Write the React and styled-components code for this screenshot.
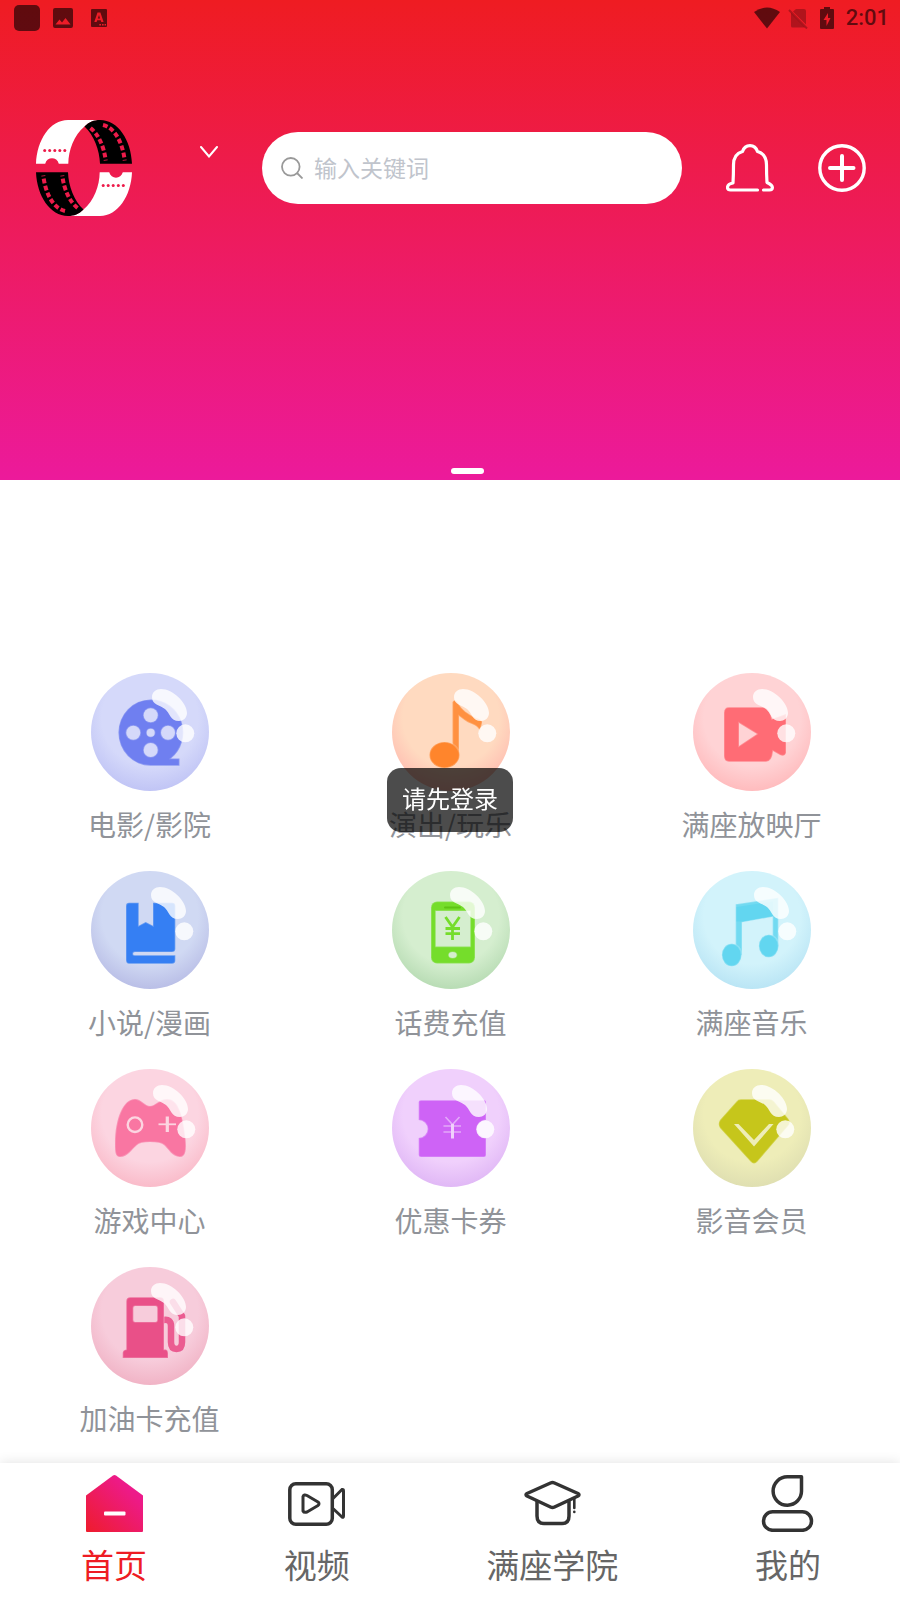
import React from "react";
import styled, { createGlobalStyle } from "styled-components";

const GlobalStyle = createGlobalStyle`
  * { box-sizing: border-box; }
  body {
    margin: 0;
    background: #fff;
    font-family: "Noto Sans CJK SC", "Noto Sans", sans-serif;
  }
  button, input { font-family: inherit; }
`;

const Page = styled.div`
  display: flex;
  flex-direction: column;
  min-height: 100vh;
`;

const Header = styled.header`
  display: flex;
  flex-direction: column;
  height: 480px;
  background: linear-gradient(#ef1c22, #ec1a9b);
`;

const StatusBar = styled.div`
  display: flex;
  align-items: center;
  justify-content: space-between;
  height: 36px;
  padding: 0 11px 0 14px;
  color: rgba(0, 0, 0, 0.6);
`;

const StatusGroup = styled.div`
  display: flex;
  align-items: center;
  gap: ${(p) => p.$gap}px;
`;

const Clock = styled.time`
  font: 500 22px/36px Roboto, sans-serif;
`;

const TopBar = styled.div`
  display: flex;
  align-items: center;
  gap: 44px;
  margin-top: 84px;
  padding: 0 34px 0 36px;
`;

const BareButton = styled.button`
  display: flex;
  align-items: center;
  flex: none;
  padding: 0;
  border: 0;
  background: none;
  color: #fff;
  cursor: pointer;
`;

const CityButton = styled(BareButton)`
  align-self: flex-start;
  justify-content: flex-end;
  width: 42px;
  height: 64px;
`;

const LogoMark = styled.svg`
  flex: none;
`;

const SearchBox = styled.form`
  display: flex;
  flex: 1;
  align-items: center;
  gap: 11px;
  min-width: 0;
  height: 72px;
  padding: 0 30px 0 19px;
  border-radius: 36px;
  background: #fff;
  svg { flex: none; }
`;

const SearchInput = styled.input`
  flex: 1;
  min-width: 0;
  height: 40px;
  padding: 0 0 2px;
  border: 0;
  outline: 0;
  background: none;
  color: #606266;
  font-size: 23px;
  &::placeholder { color: #c0c4cc; opacity: 1; }
`;

const Indicators = styled.div`
  display: flex;
  justify-content: center;
  gap: 2px;
  margin-top: auto;
  padding-bottom: 6px;
`;

const Indicator = styled.button`
  width: 33px;
  height: 6px;
  padding: 0;
  border: 0;
  border-radius: 3px;
  background: ${(p) => (p.$active ? "#fff" : "transparent")};
`;

const Services = styled.main`
  display: grid;
  grid-template-columns: repeat(3, 1fr);
  gap: 27px 4px;
  padding: 193px 0 25px 1px;
`;

const Service = styled.a`
  display: flex;
  flex-direction: column;
  align-items: center;
  gap: 13px;
  color: #909399;
  text-decoration: none;
`;

const ServiceName = styled.span`
  font-size: 28px;
  line-height: 40px;
`;

const TabBar = styled.nav`
  display: flex;
  justify-content: space-between;
  margin-top: auto;
  padding: 12px 79px 12px 81px;
  background: #fff;
  box-shadow: 0 0 12px rgba(0, 0, 0, 0.12);
`;

const Tab = styled.a`
  display: flex;
  flex-direction: column;
  align-items: center;
  gap: 8px;
  color: ${(p) => (p.$active ? "#ee1c23" : "#666")};
  font-size: 33px;
  line-height: 48px;
  text-decoration: none;
`;

const Toast = styled.div`
  position: fixed;
  top: 50%;
  left: 50%;
  transform: translate(-50%, -50%);
  padding: 10px 15px 14px;
  border-radius: 14px;
  background: rgba(0, 0, 0, 0.7);
  color: #fff;
  font-size: 24px;
  line-height: 40px;
  white-space: nowrap;
`;

const ticketHalf = (
  <>
    <path fill="#fff" d="M32 0H65C58 0 53 2 48.5 6.5C38 15 32.5 30 32.3 43.7H22.8C21 36.5 11 36.5 9.2 43.7H0C1 20 14 0 32 0Z" />
    <path fill="#000" d="M48.5 6.5C53 2 58 0 64 0C82 0 95 20 96 43.7H64C63.5 30 58 15 48.5 6.5Z" />
    <g fill="none" stroke="#ed1b4a" strokeWidth="4" strokeDasharray="4.8 2.4">
      <path d="M54.500 8C62 14 68 26 69.700 40.500" />
      <path d="M67 5C80 8 87 25 88.700 40.500" />
    </g>
    <g fill="#ed1b4a">
      {[8.7, 13.7, 18.8, 23.8, 28.8].map((x) => (
        <circle key={x} cx={x} cy="30.5" r="1.5" />
      ))}
    </g>
  </>
);

const Logo = () => (
  <LogoMark width="96" height="96" viewBox="0 0 96 96" role="img" aria-label="满座">
    {ticketHalf}
    <g transform="rotate(180 48 48)">{ticketHalf}</g>
  </LogoMark>
);

const Yen = ({ color, width }) => (
  <path
    d="M53.5 46L60.5 56L67.5 46M60.5 56V69M53.5 57.5H68M53.5 62.7H68"
    fill="none"
    stroke={color}
    strokeOpacity="1"
    strokeWidth={width}
  />
);

const services = [
  {
    name: "电影/影院", base: "#d5d9fa", edge: "#bbbff4", ink: "#6f7ff0", dx: 0,
    art: (c, b) => (
      <>
        <path d="M59.500 26.500A32 33 0 0 1 80 85.500H88.500V92.700H59.500A32 33 0 0 1 59.500 26.500Z" />
        <g fill={b}>
          <circle cx="59.7" cy="42.3" r="7" />
          <circle cx="42.3" cy="59.7" r="7" />
          <circle cx="77" cy="59.7" r="7" />
          <circle cx="59.7" cy="77" r="7" />
          <circle cx="59.7" cy="59.7" r="4" />
        </g>
      </>
    ),
  },
  {
    name: "演出/玩乐", base: "#ffdac0", edge: "#ffb6ad", ink: "#ff852c", dx: 1,
    art: () => (
      <>
        <path opacity=".85" d="M60.5 29Q63 25 66 30C70 37 76 41 84 45Q91 47 90 50L88 58Q86 53 80 51C74 49 70 45 67 43V82H60.5Z" />
        <ellipse cx="52.5" cy="82" rx="15" ry="13" />
      </>
    ),
  },
  {
    name: "满座放映厅", base: "#ffd3d5", edge: "#ffb5b7", ink: "#ff6c75", dx: -1,
    art: (c, b) => (
      <>
        <path d="M36 34.3H71Q77 36 79 46L93 41V80Q92 84 87 82L80 78Q79 88.7 73 88.7H36Q31 88.7 31 83V40Q31 34.3 36 34.3Z" />
        <path fill={b} d="M46 50L64 61L46 73Z" />
      </>
    ),
  },
  {
    name: "小说/漫画", base: "#d0d9f3", edge: "#b3b7e3", ink: "#357ff3", dx: -1,
    art: () => (
      <path d="M38 31.7H47.7V54.7L54.7 51L62 54.7V31.7H81Q84.3 31.7 84.3 35V78Q84.3 81 81 81H44Q42 81 42 82.7Q42 84.3 44 84.3H84.3V90Q84 92.7 81 92.7H38Q35 92.7 35 89V35Q35 31.7 38 31.7Z" />
    ),
  },
  {
    name: "话费充值", base: "#d5eecf", edge: "#b0d7ad", ink: "#75dd2b", dx: -3,
    art: (c, b) => (
      <>
        <rect x="39" y="30.5" width="44" height="62" rx="6" />
        <rect fill={b} x="43.7" y="40" width="34.6" height="35.5" />
        <ellipse fill={b} cx="60.7" cy="84" rx="4" ry="3" />
        <rect x="52" y="35.5" width="17" height="2" rx="1" fill="#5ec414" stroke="none" />
        <Yen color={c} width="2.8" />
      </>
    ),
  },
  {
    name: "满座音乐", base: "#d2f3fb", edge: "#b3e1f3", ink: "#62d6f0", dx: 0,
    art: () => (
      <>
        <path opacity=".85" d="M42.7 33.3L85.3 26.7V75H79.7V45.7L49 51.3V84H42.7Z" />
        <path stroke="none" d="M43.500 36L80 30.500V45L49 50.500H43.500Z" />
        <ellipse cx="38.7" cy="84" rx="9.8" ry="11.3" />
        <ellipse cx="75.7" cy="75" rx="9.8" ry="11.3" />
      </>
    ),
  },
  {
    name: "游戏中心", base: "#fcd5e1", edge: "#f9b4c3", ink: "#f976a2", dx: 1,
    art: (c, b) => (
      <>
        <path d="M44 30C50 30 54 37 59 37S69 30 76 30C88 30 92 48 94.5 70C95.5 80 95 88 89 88C81 88 77 79 73 76Q70 73 59 73Q49 73 46 76C41 80 37 88 29 88C24 88 24 82 24 75C24 50 32 30 44 30Z" />
        <g fill="none" stroke={b} strokeOpacity="1">
          <circle cx="44" cy="55.7" r="7.3" strokeWidth="2.4" />
          <path strokeWidth="1.8" d="M67.500 55.300H85" />
          <path strokeWidth="3.2" d="M76.300 47.500V63" />
        </g>
      </>
    ),
  },
  {
    name: "优惠卡券", base: "#f0d0fc", edge: "#dcb1f4", ink: "#ce63f6", dx: -1,
    art: (c, b) => (
      <>
        <path d="M29 31.3H92Q94 31.3 94 33V51A9 9 0 0 0 94 69V86Q94 88 92 88H29Q26.7 88 26.7 86V69A9 9 0 0 0 26.7 51V33Q26.7 31.3 29 31.3Z" />
        <path d="M53.500 48L60.500 55.500L67.500 48M51.500 57H69M51.500 63H69" fill="none" stroke={b} strokeOpacity=".65" strokeWidth="1.6" />
        <path d="M60.500 55V69.500" fill="none" stroke={b} strokeOpacity="1" strokeWidth="3" />
      </>
    ),
  },
  {
    name: "影音会员", base: "#eeedb8", edge: "#dbdbaf", ink: "#c6c61b", dx: -2,
    art: (c, b) => (
      <>
        <path d="M48 30.3H76Q79 30.3 81 32.5L95.5 50Q98 54 95 57L64.5 92.5Q61 96.5 57.5 92.5L27 59Q24.5 55 27 51L43.5 32.5Q45 30.3 48 30.3Z" />
        <path fill={b} stroke="none" d="M41 55H45.500L61 71L76 55H80.500L61 77.500Z" />
      </>
    ),
  },
  {
    name: "加油卡充值", base: "#f7ccdb", edge: "#efadc0", ink: "#e95088", dx: -1,
    art: (c, b) => (
      <>
        <path fill="none" stroke={c} strokeOpacity=".9" strokeWidth="6.500" strokeLinecap="round" strokeLinejoin="round" d="M73 53Q80 52 80 59V75Q80 82 85.500 82T91 75V49L82 35" />
        <path d="M39.5 30.3H69Q73 30.3 73 34.5V82.5H75Q77 83 77 86V91H31.7V86Q31.7 83 35.3 82.5V34.5Q35.3 30.3 39.5 30.3Z" />
        <rect fill={b} x="42.3" y="39" width="24" height="16" rx="2" />
      </>
    ),
  },
];

const Bubble = ({ item, id }) => (
  <svg width="118" height="118" viewBox="0 0 118 118" aria-hidden="true">
    <defs>
      <radialGradient id={id} cx="50%" cy="38%" r="68%">
        <stop offset="0.6" stopColor={item.base} />
        <stop offset="1" stopColor={item.edge} />
      </radialGradient>
    </defs>
    <circle cx="59" cy="59" r="59" fill={`url(#${id})`} />
    <g fill={item.ink} stroke={item.base} strokeOpacity=".3" strokeWidth="1.6">
      {item.art(item.ink, item.base)}
    </g>
    <g fill="#fff" fillOpacity=".8" transform={`translate(${item.dx} 0)`}>
      <path d="M61 24C61 19 65 16 70 16C82 16 96 30 96 40C96 45 92 48 88 48C79 48 79 40 74 36C69 32 61 32 61 24Z" />
      <circle cx="94.3" cy="60.3" r="9" />
    </g>
  </svg>
);

const HomeIcon = () => (
  <svg width="57" height="57" viewBox="0 0 57 57" aria-hidden="true">
    <defs>
      <linearGradient id="home" x1="0" y1="1" x2="1" y2="0">
        <stop offset="0" stopColor="#ee1c2c" />
        <stop offset=".75" stopColor="#ed1a88" />
        <stop offset="1" stopColor="#ed1a94" />
      </linearGradient>
    </defs>
    <path fill="url(#home)" d="M0 20.5L27 .6Q28.5 -.4 30 .6L57 20.5V56Q57 57 56 57H1Q0 57 0 56Z" />
    <rect x="18" y="36.5" width="21.5" height="4" rx="1" fill="#fff" />
  </svg>
);

const OutlineIcon = ({ children }) => (
  <svg width="57" height="57" viewBox="0 0 57 57" fill="none" stroke="#333" strokeWidth="3.5" strokeLinejoin="round" strokeLinecap="round" aria-hidden="true">
    {children}
  </svg>
);

const tabs = [
  { name: "首页", active: true, icon: <HomeIcon /> },
  {
    name: "视频",
    icon: (
      <OutlineIcon>
        <rect x="1.8" y="8.8" width="42.5" height="40.5" rx="6" />
        <path strokeWidth="3" d="M45.5 23L54 14.5Q55.5 14 55.5 16V41Q55.5 43 54 42L45.5 34" />
        <path strokeWidth="3" d="M15 21.5Q16 19 19 20.5L30 27Q32 28.500 30 30.500L19 37Q16 38 15 36Z" />
      </OutlineIcon>
    ),
  },
  {
    name: "满座学院",
    icon: (
      <OutlineIcon>
        <path d="M3 18.500L26.5 8Q28.5 7.200 30.5 8L54 18.500Q56 19.700 54 21L30.5 32Q28.5 32.900 26.5 32L3 21Q1 19.700 3 18.500Z" />
        <path d="M13 26.500V41Q13 48.500 20 48.500H38Q45 48.500 45 41V26.500" />
        <path strokeWidth="2.6" d="M50.3 23V33M50.3 36.800V37" />
      </OutlineIcon>
    ),
  },
  {
    name: "我的",
    icon: (
      <OutlineIcon>
        <path d="M28.5 1.8H42.5V15.5A14.2 14.2 0 1 1 28.5 1.8Z" />
        <rect x="4.5" y="36.8" width="48" height="18.5" rx="9.2" />
      </OutlineIcon>
    ),
  },
];

export default function App() {
  return (
    <Page>
      <GlobalStyle />
      <Header>
        <StatusBar>
          <StatusGroup $gap={13}>
            <svg width="26" height="26" viewBox="0 0 26 26" fill="currentColor" aria-hidden="true">
              <rect width="26" height="26" rx="5" />
            </svg>
            <svg width="20" height="20" viewBox="0 0 20 20" fill="currentColor" aria-hidden="true">
              <path fillRule="evenodd" d="M2 0H18Q20 0 20 2V18Q20 20 18 20H2Q0 20 0 18V2Q0 0 2 0ZM2.5 16.5H17.5L12.5 10L9 14.5L6.5 11.5Z" />
            </svg>
            <svg width="26" height="20" viewBox="0 0 26 20" fill="currentColor" aria-hidden="true">
              <path fillRule="evenodd" d="M6 1H20Q21 1 21 2V18Q21 19 20 19H6Q5 19 5 18V2Q5 1 6 1ZM11.5 4.5L8.3 14H10.6L11.2 12.3H14.7L15.3 14H17.6L14.4 4.5ZM11.8 10.4L13 7L14.1 10.4ZM13.3 16H15V17.5H13.3ZM16 16H17.6V17.5H16ZM18.6 16H20V17.5H18.6Z" />
            </svg>
          </StatusGroup>
          <StatusGroup $gap={8}>
            <svg width="26" height="22" viewBox="0 0 26 22" fill="currentColor" aria-hidden="true">
              <path d="M13 21.500L0 5Q13 -4 26 5Z" />
            </svg>
            <svg width="20" height="22" viewBox="0 0 20 22" aria-hidden="true">
              <path fill="#000" fillOpacity=".26" d="M8 2H16Q18 2 18 4V17.5L5 4.5ZM3 6L17 20.5H4.5Q3 20.5 3 19Z" />
              <path d="M1 3L19 21.5" stroke="#000" strokeOpacity=".26" strokeWidth="2" />
            </svg>
            <svg width="22" height="22" viewBox="4 0 22 22" fill="currentColor" aria-hidden="true">
              <path fillRule="evenodd" d="M12 0H18V2H21Q22 2 22 3V21Q22 22 21 22H9Q8 22 8 21V3Q8 2 9 2H12ZM16 6L11.5 13H14.5V19L18.5 11H16Z" />
            </svg>
            <Clock>2:01</Clock>
          </StatusGroup>
        </StatusBar>

        <TopBar>
          <Logo />
          <CityButton type="button" aria-label="选择城市">
            <svg width="18" height="12" viewBox="0 0 18 12" fill="none" stroke="currentColor" strokeWidth="2" strokeLinecap="round" aria-hidden="true">
              <path d="M1 1L9 10.5L17 1" />
            </svg>
          </CityButton>
          <SearchBox role="search">
            <svg width="22" height="22" viewBox="0 0 22 22" fill="none" stroke="#999" strokeWidth="1.8" aria-hidden="true">
              <circle cx="9.8" cy="9.8" r="8.8" />
              <path d="M16 16L21.5 21.5" />
            </svg>
            <SearchInput type="text" placeholder="输入关键词" aria-label="搜索" />
          </SearchBox>
          <BareButton type="button" aria-label="消息">
            <svg width="48" height="48" viewBox="0 0 48 48" fill="none" stroke="currentColor" strokeWidth="3.2" strokeLinecap="round" strokeLinejoin="round" aria-hidden="true">
              <path d="M31.5 46H4.5Q1.5 46 1.5 43.5Q1.5 40 7 39Q7.5 31 7.5 21C7.5 13 11 9 16.500 7.500C18 3 20 1.6 24 1.6S30 3 31.5 7.5C37 9 40.5 13 40.5 21Q40.500 31 41 38.500Q46.4 41 46.4 43.5Q46.4 46 43.5 46H37.5" />
            </svg>
          </BareButton>
          <BareButton type="button" aria-label="更多">
            <svg width="48" height="48" viewBox="0 0 48 48" fill="none" stroke="currentColor" strokeWidth="3.4" strokeLinecap="round" aria-hidden="true">
              <circle cx="24" cy="24" r="22.2" />
              <path strokeWidth="4" d="M12 24H35.5M24 12V36" />
            </svg>
          </BareButton>
        </TopBar>

        <Indicators>
          <Indicator type="button" aria-label="第1张" />
          <Indicator type="button" aria-label="第2张" $active />
        </Indicators>
      </Header>

      <Services>
        {services.map((item, i) => (
          <Service href="#" key={item.name}>
            <Bubble item={item} id={`bubble-${i}`} />
            <ServiceName>{item.name}</ServiceName>
          </Service>
        ))}
      </Services>

      <TabBar>
        {tabs.map((tab) => (
          <Tab href="#" key={tab.name} $active={tab.active} aria-current={tab.active ? "page" : undefined}>
            {tab.icon}
            <span>{tab.name}</span>
          </Tab>
        ))}
      </TabBar>

      <Toast role="status">请先登录</Toast>
    </Page>
  );
}
